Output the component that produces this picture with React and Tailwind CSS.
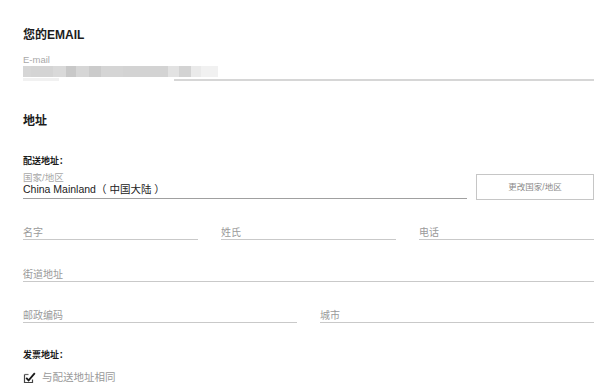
import React from 'react';

const font = { fontFamily: '"Liberation Sans", "Noto Sans CJK SC", sans-serif' };

const blurBlocks = [
  ['w-[8px]', 'bg-[#d6d6d6]'],
  ['w-[22px]', 'bg-[#d4d4d4]'],
  ['w-[13px]', 'bg-[#d9d9d9]'],
  ['w-[10px]', 'bg-[#c8c8c8]'],
  ['w-[13px]', 'bg-[#d6d6d6]'],
  ['w-[12px]', 'bg-[#cbcbcb]'],
  ['w-[22px]', 'bg-[#d5d5d5]'],
  ['w-[45px]', 'bg-[#d3d3d3]'],
  ['w-[11px]', 'bg-[#e2e2e2]'],
  ['w-[12px]', 'bg-[#d3d3d3]'],
  ['w-[10px]', 'bg-[#eaeaea]'],
  ['w-[17px]', 'bg-[#f1f1f1]'],
];

const Field = ({ label, className = '' }) => (
  <div className={`border-b border-[#c9c9c9] text-[10px] leading-[12px] text-[#9a9a9a] ${className}`}>
    {label}
  </div>
);

const Checkbox = () => (
  <svg className="w-[13px] h-[11px]" viewBox="0 0 13 11" fill="none">
    <path d="M1.5 2.5v8h8v-3" stroke="#444" strokeWidth="1.2" />
    <path d="M1.5 2.5h4" stroke="#666" strokeWidth="1.2" />
    <path d="M3.2 5.8l2.4 2.6L11.8 1.2" stroke="#1a1a1a" strokeWidth="1.8" />
  </svg>
);

export default function App() {
  return (
    <div className="min-h-screen bg-white pl-[23px] pr-[12px] pt-[28px]" style={font}>
      {/* Email */}
      <h2 className="text-[12px] leading-[14px] font-bold text-[#1c1c1c]">您的EMAIL</h2>
      <div className="mt-[12px] text-[9.5px] leading-[11px] text-[#a8a8a8]">E-mail</div>
      <div className="mt-[1px] flex h-[11px]">
        {blurBlocks.map(([w, c], i) => (
          <div key={i} className={`h-full ${w} ${c}`} />
        ))}
      </div>
      <div className="mt-[1px] flex h-[3px] items-end">
        <div className="h-[3px] w-[36px] bg-[#f1f1f1]" />
        <div className="w-[115px]" />
        <div className="h-[2px] flex-1 bg-[#d6d6d6]" />
      </div>

      {/* Address */}
      <h2 className="mt-[33px] text-[12px] leading-[14px] font-bold text-[#1c1c1c]">地址</h2>
      <div className="mt-[28px] text-[9px] leading-[11px] font-bold text-[#1c1c1c]">配送地址：</div>

      <div className="mt-[5px] flex items-end gap-[9px]">
        <div className="flex-1 border-b border-[#a0a0a0] pb-[3px]">
          <div className="text-[9.5px] leading-[11px] text-[#a8a8a8]">国家/地区</div>
          <div className="text-[10.5px] leading-[12px] text-[#222]">China Mainland（ 中国大陆 ）</div>
        </div>
        <button className="mb-[-1px] flex h-[26px] w-[118px] items-center justify-center border border-[#c6c6c6] bg-white text-[8.5px] text-[#8a8a8a]">
          更改国家/地区
        </button>
      </div>

      <div className="mt-[28px] grid grid-cols-3 gap-[23px]">
        <Field label="名字" />
        <Field label="姓氏" />
        <Field label="电话" />
      </div>

      <Field label="街道地址" className="mt-[29px]" />

      <div className="mt-[28px] grid grid-cols-2 gap-[23px]">
        <Field label="邮政编码" />
        <Field label="城市" />
      </div>

      <div className="mt-[27px] text-[9px] leading-[11px] font-bold text-[#1c1c1c]">发票地址：</div>
      <label className="mt-[10px] flex items-center gap-[6px] text-[10.5px] leading-[12px] text-[#9a9a9a]">
        <Checkbox />
        与配送地址相同
      </label>
    </div>
  );
}
